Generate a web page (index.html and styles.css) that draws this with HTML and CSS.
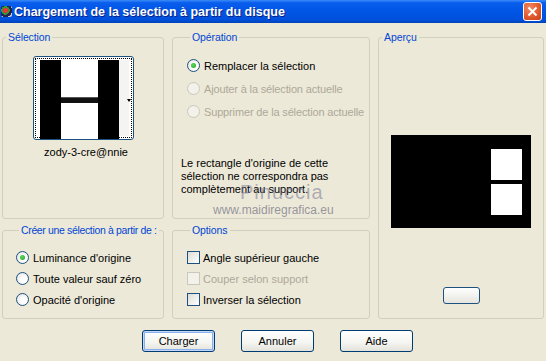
FILE: index.html
```html
<!DOCTYPE html>
<html lang="fr">
<head>
    <meta charset="UTF-8">
    <title>Chargement de la sélection à partir du disque</title>
    <link rel="stylesheet" href="styles.css">
</head>
<body>
    <div class="titlebar">
        <span class="appicon"></span>
        <span class="title">Chargement de la sélection à partir du disque</span>
        <span class="close">
            <svg width="11" height="11" viewBox="0 0 11 11"><path d="M1.5 1.5 L9.5 9.5 M9.5 1.5 L1.5 9.5" stroke="#fff" stroke-width="2"/></svg>
        </span>
    </div>

    <div class="content">
        <fieldset class="grp sel">
            <legend>Sélection</legend>
            <div class="thumb">
                <div class="focus">
                    <div class="hpic">
                        <span class="bar"></span>
                        <span class="mid"><i></i></span>
                        <span class="bar"></span>
                    </div>
                    <span class="strip"></span>
                </div>
                <span class="arrow"></span>
            </div>
            <div class="name">zody-3-cre@nnie</div>
        </fieldset>

        <fieldset class="grp op">
            <legend>Opération</legend>
            <label class="opt"><span class="radio on"></span>Remplacer la sélection</label>
            <label class="opt off"><span class="radio"></span>Ajouter à la sélection actuelle</label>
            <label class="opt off"><span class="radio"></span>Supprimer de la sélection actuelle</label>
            <p class="note">Le rectangle d'origine de cette sélection ne correspondra pas complètement au support.</p>
            <div class="wm1">Pinuccia</div>
            <div class="wm2">www.maidiregrafica.eu</div>
        </fieldset>

        <fieldset class="grp prev">
            <legend>Aperçu</legend>
            <div class="preview">
                <span class="sq"></span>
                <span class="sq"></span>
            </div>
            <button class="mini"></button>
        </fieldset>

        <fieldset class="grp src">
            <legend>Créer une sélection à partir de :</legend>
            <label class="opt"><span class="radio on"></span>Luminance d'origine</label>
            <label class="opt"><span class="radio"></span>Toute valeur sauf zéro</label>
            <label class="opt"><span class="radio"></span>Opacité d'origine</label>
        </fieldset>

        <fieldset class="grp opts">
            <legend>Options</legend>
            <label class="opt"><span class="check"></span>Angle supérieur gauche</label>
            <label class="opt off"><span class="check"></span>Couper selon support</label>
            <label class="opt"><span class="check"></span>Inverser la sélection</label>
        </fieldset>
    </div>

    <div class="buttons">
        <button class="btn default">Charger</button>
        <button class="btn">Annuler</button>
        <button class="btn">Aide</button>
    </div>
</body>
</html>
```

FILE: styles.css
```css
body {
    margin: 0;
    background: #ece9d8;
    font-family: "Liberation Sans", Arial, sans-serif;
    font-size: 10.5px;
    color: #000;
    width: 546px;
    height: 361px;
    overflow: hidden;
}
.titlebar {
    height: 23px;
    display: flex;
    align-items: center;
    background: linear-gradient(#3a8cf7, #0a5ded 12%, #0055e5 50%, #0050dc 85%, #0043b8);
    color: white;
    padding-left: 1px;
}
.appicon {
    width: 11px;
    height: 11px;
    margin-right: 2px;
    background: radial-gradient(circle at 40% 40%, #e33 0 25%, #393 26% 45%, #225 46% 70%, #ccc 71%);
    border-radius: 2px;
}
.title {
    font-weight: bold;
    font-size: 12.5px;
    text-shadow: 1px 1px #0a1e80;
    flex: 1;
}
.close {
    width: 19px;
    height: 19px;
    margin-right: 4px;
    border: 1px solid #fff;
    border-radius: 3px;
    background: radial-gradient(circle at 35% 30%, #f08a64, #e25a2e 55%, #c1401a);
    display: flex;
    align-items: center;
    justify-content: center;
    box-sizing: border-box;
}
.content {
    display: grid;
    grid-template-columns: 162px 198px 166px;
    grid-template-rows: 188px 95px;
    column-gap: 8px;
    row-gap: 5px;
    padding: 8px 0 0 2px;
}
.grp {
    margin: 0;
    padding: 0;
    min-width: 0;
    border: 1px solid #d0d0bf;
    border-radius: 3px;
    position: relative;
}
.grp legend {
    color: #0046d5;
    padding: 0 2px;
    margin-left: 3px;
    line-height: 13px;
    white-space: nowrap;
    letter-spacing: -0.1px;
}
.src legend {
    letter-spacing: -0.35px;
}
.sel {
    display: flex;
    flex-direction: column;
    align-items: center;
}
.thumb {
    margin-top: 12px;
    width: 101px;
    height: 84px;
    box-sizing: border-box;
    border: 1px solid #1c5180;
    border-radius: 3px;
    background: #fff;
    padding: 1px;
    position: relative;
}
.focus {
    height: 100%;
    border: 1px dotted #000;
    box-sizing: border-box;
    display: flex;
    padding: 1px 0 1px 4px;
}
.hpic {
    width: 79px;
    height: 79px;
    display: flex;
}
.hpic .bar {
    width: 21px;
    background: #000;
}
.hpic .mid {
    flex: 1;
    display: flex;
    align-items: center;
    background: #fff;
}
.hpic .mid i {
    flex: 1;
    height: 5px;
    background: #111;
    border-top: 1px solid #555;
}
.strip {
    width: 10px;
    background: #f4f4f2;
}
.arrow {
    position: absolute;
    right: 2px;
    top: 42px;
    border-left: 2px solid transparent;
    border-right: 2px solid transparent;
    border-top: 3px solid #000;
}
.name {
    margin-top: 6px;
    margin-left: 6px;
    font-size: 11px;
}
.opt {
    display: flex;
    align-items: center;
    height: 21px;
    white-space: nowrap;
    font-size: 11px;
}
.opt.off {
    color: #aca899;
}
.radio {
    width: 13px;
    height: 13px;
    box-sizing: border-box;
    border: 1px solid #1c5180;
    border-radius: 50%;
    background: radial-gradient(circle at 60% 60%, #fff 30%, #dcdcd6);
    margin-right: 4px;
    display: flex;
    align-items: center;
    justify-content: center;
}
.radio.on::after {
    content: "";
    width: 5px;
    height: 5px;
    border-radius: 50%;
    background: radial-gradient(circle at 40% 40%, #5cd85c, #21a121);
}
.off .radio, .off .check {
    border-color: #cac8bb;
    background: #f2f1ea;
}
.check {
    width: 13px;
    height: 13px;
    box-sizing: border-box;
    border: 1px solid #1c5180;
    background: linear-gradient(135deg, #dcdcd6, #fff);
    margin-right: 3px;
}
.op {
    padding: 10px 0 0 14px;
}
.op .opt {
    height: 23px;
}
.op .opt.off {
    letter-spacing: -0.15px;
}
.note {
    margin: 34px 0 0 -6px;
    width: 170px;
    line-height: 13px;
    font-size: 11px;
}
.wm1 {
    position: absolute;
    left: 67px;
    top: 137px;
    font-size: 20px;
    letter-spacing: 1px;
    color: rgba(120, 120, 150, 0.55);
}
.wm2 {
    position: absolute;
    left: 40px;
    top: 159px;
    font-size: 12px;
    color: rgba(110, 110, 130, 0.7);
}
.prev {
    grid-row: 1 / 3;
    grid-column: 3;
    display: flex;
    flex-direction: column;
    align-items: center;
}
.preview {
    margin-top: 91px;
    width: 140px;
    height: 93px;
    background: #000;
    display: flex;
    flex-direction: column;
    align-items: flex-end;
    gap: 4px;
    padding: 14px 9px 0 0;
    box-sizing: border-box;
}
.sq {
    width: 31px;
    height: 31px;
    background: #fff;
}
.mini {
    margin-top: 59px;
    width: 37px;
    height: 17px;
    border: 1px solid #1c5180;
    border-radius: 3px;
    background: linear-gradient(#fff, #e6e5de);
    padding: 0;
}
.src {
    padding: 10px 0 0 13px;
}
.opts {
    padding: 10px 0 0 14px;
}
.buttons {
    display: flex;
    gap: 26px;
    padding: 11px 0 0 142px;
}
.btn {
    width: 73px;
    height: 22px;
    font-family: "Liberation Sans", Arial, sans-serif;
    font-size: 11px;
    border: 1px solid #003c74;
    border-radius: 3px;
    background: linear-gradient(#fff, #f4f4f0 60%, #e3e2da);
    color: #000;
    padding: 0;
}
.btn.default {
    box-shadow: inset 0 0 0 1px #c4d8f6, inset 0 0 0 2px #8ab0ee;
}
```
